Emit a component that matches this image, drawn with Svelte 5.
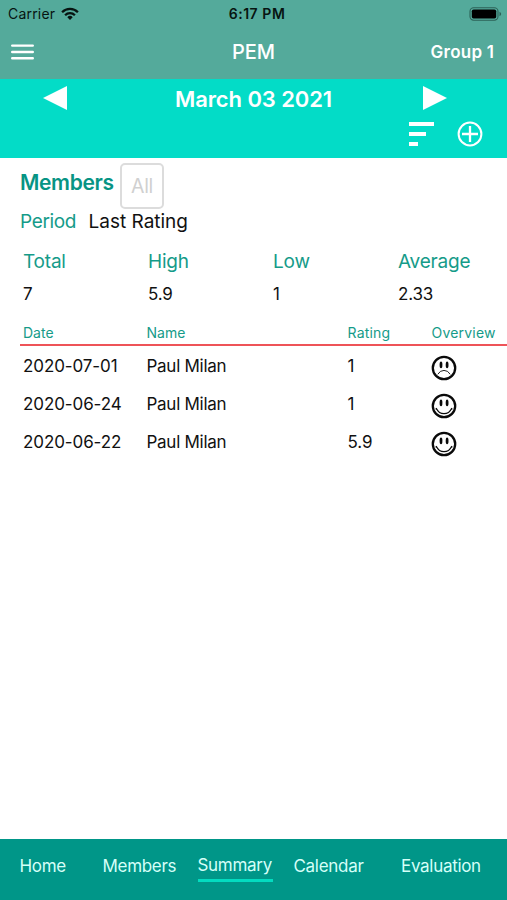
<script>
  const stats = [
    { label: 'Total', value: '7' },
    { label: 'High', value: '5.9' },
    { label: 'Low', value: '1' },
    { label: 'Average', value: '2.33' }
  ];
  const rows = [
    { date: '2020-07-01', name: 'Paul Milan', rating: '1', happy: false },
    { date: '2020-06-24', name: 'Paul Milan', rating: '1', happy: true },
    { date: '2020-06-22', name: 'Paul Milan', rating: '5.9', happy: true }
  ];
</script>

<div class="screen">
  <header>
    <div class="status">
      <div class="carrier">
        <span>Carrier</span>
        <svg width="18" height="14" viewBox="0 0 18 14" fill="none" stroke="#071411" stroke-width="2.3">
          <path d="M1.1 5.2a11.2 11.2 0 0 1 15.8 0M4.1 8.2a6.9 6.9 0 0 1 9.8 0" />
          <path d="M9 13 6.3 10.2a3.8 3.8 0 0 1 5.4 0Z" fill="#071411" stroke="none" />
        </svg>
      </div>
      <span class="time">6:17 PM</span>
      <svg class="battery" width="33" height="14" viewBox="0 0 33 14">
        <rect x="1" y=".8" width="28" height="12.4" rx="3.6" fill="none" stroke="#2d6258" stroke-width="1.1" />
        <rect x="2.8" y="2.5" width="24.4" height="9" rx="1.8" fill="#000" />
        <path d="M30.5 4.7v4.6q1.7-.8 1.7-2.3t-1.7-2.3" fill="#2d6258" />
      </svg>
    </div>
    <div class="bar">
      <svg class="menu" width="23" height="16" viewBox="0 0 23 16" stroke="#fff" stroke-width="2.4" stroke-linecap="round">
        <path d="M1.2 1.6h20.6M1.2 8h20.6M1.2 14.2h20.6" />
      </svg>
      <span class="title">PEM</span>
      <span class="group">Group 1</span>
    </div>
  </header>

  <section class="datebar">
    <div class="day">
      <svg width="24" height="24" viewBox="0 0 24 24" fill="#fff"><path d="M24 0v24L0 12Z" /></svg>
      <span class="date">March 03 2021</span>
      <svg width="24" height="24" viewBox="0 0 24 24" fill="#fff"><path d="M0 0v24l24-12Z" /></svg>
    </div>
    <div class="tools">
      <svg width="25" height="26" viewBox="0 0 25 26" fill="#fff">
        <path d="M0 1h25v4H0zM0 11h17v4H0zM0 21h9v4H0z" />
      </svg>
      <svg width="26" height="26" viewBox="0 0 26 26" fill="none" stroke="#fff">
        <circle cx="13" cy="13" r="11.4" stroke-width="2" />
        <path d="M13 5v16M5 13h16" stroke-width="2.3" />
      </svg>
    </div>
  </section>

  <main>
    <div class="members"><b>Members</b><span class="all">All</span></div>
    <div class="period"><span class="plabel">Period</span><span class="pval">Last Rating</span></div>
    <div class="stats">
      {#each stats as s}
        <div><div class="slabel">{s.label}</div><div class="sval">{s.value}</div></div>
      {/each}
    </div>
    <div class="grid head"><span>Date</span><span>Name</span><span class="hrate">Rating</span><span class="hover">Overview</span></div>
    {#each rows as r}
      <div class="grid row">
        <span class="rdate">{r.date}</span><span class="rname">{r.name}</span><span>{r.rating}</span>
        <svg width="26" height="26" viewBox="0 0 26 26" fill="none" stroke="#0a0a0a">
          <circle cx="13" cy="13" r="11.2" stroke-width="2.3" />
          <ellipse cx="10" cy="9.9" rx="1.4" ry="3.3" fill="#0a0a0a" stroke="none" />
          <ellipse cx="16.1" cy="9.9" rx="1.4" ry="3.3" fill="#0a0a0a" stroke="none" />
          {#if r.happy}
            <path d="M5.4 15.5q2.4 5.2 7.6 5.2t7.6-5.2M4.6 16.3l1.4-1M21.4 16.3l-1.4-1" stroke-width="1.2" />
          {:else}
            <path d="M6.8 19.3q2.2-3.9 6.2-3.9t6.2 3.9" stroke-width=".9" />
          {/if}
        </svg>
      </div>
    {/each}
  </main>

  <nav>
    <span class="home">Home</span>
    <span class="mem">Members</span>
    <span class="active">Summary</span>
    <span class="cal">Calendar</span>
    <span class="eval">Evaluation</span>
  </nav>
</div>

<style>
  :global(body) { margin: 0; background: #fff; }
  .screen {
    width: 507px; height: 900px; display: flex; flex-direction: column;
    overflow: hidden; background: #fff; color: #111;
    font-family: Inter, "Liberation Sans", sans-serif; white-space: nowrap;
  }
  svg { display: block; flex: none; }
  header { height: 79px; background: #54aa9b; flex: none; }
  .status, .bar { display: grid; grid-template-columns: 1fr auto 1fr; align-items: center; }
  .status { height: 27px; padding: 0 5px 0 8px; color: #071411; font-size: 14px; }
  .carrier { display: flex; align-items: center; gap: 6px; letter-spacing: .2px; }
  .time { font-weight: 600; padding-left: 4px; letter-spacing: .55px; }
  .battery, .group { justify-self: end; }
  .bar { height: 50px; padding: 0 13px 0 11px; color: #fff; }
  .title { font-size: 20px; font-weight: 500; padding-left: 2px; }
  .group { font-size: 17px; font-weight: 600; letter-spacing: .25px; margin-right: -.25px; }
  .datebar { height: 79px; background: #03dcc7; flex: none; color: #fff; }
  .day { display: grid; grid-template-columns: 132px 1fr 24px; align-items: center; height: 38px; padding: 0 60px 0 43px; }
  .date { font-size: 22px; font-weight: 600; letter-spacing: -.1px; padding-top: 1px; }
  .tools { display: flex; justify-content: flex-end; gap: 23px; padding: 4px 24px 0 0; }
  main { flex: 1; padding-left: 20px; }
  .members { display: flex; height: 51px; color: #079484; font-size: 21px; }
  .members b { font-weight: 600; line-height: 26px; padding-top: 12px; width: 100px; letter-spacing: -.35px; }
  .all { box-sizing: border-box; width: 44px; height: 46px; margin-top: 5px; border: 2px solid #dcdcdc; border-radius: 5px; color: #d0d0d0; font-size: 19.5px; line-height: 43px; text-align: center; letter-spacing: -.3px; }
  .period { display: flex; font-size: 19px; line-height: 26px; height: 24px; }
  .plabel { width: 68.5px; color: #159b89; letter-spacing: -.35px; }
  .stats { display: grid; grid-template-columns: repeat(4, 125px); padding: 15px 0 0 3px; }
  .slabel { color: #159b89; font-size: 19px; line-height: 27px; height: 26px; letter-spacing: -.2px; }
  .sval { font-size: 17px; line-height: 22px; margin-top: 9px; letter-spacing: -.2px; }
  .grid { display: grid; grid-template-columns: 123.5px 201px 84px 1fr; padding-left: 3px; align-items: center; }
  .head { height: 25px; margin-top: 14px; border-bottom: 2px solid #ee5358; color: #159b89; font-size: 14px; }
  .head span { padding-top: 1px; }
  .hrate, .hover { letter-spacing: .2px; }
  .row { height: 38px; font-size: 17px; }
  .row span { padding-top: 2px; letter-spacing: -.1px; }
  .row .rname { letter-spacing: -.27px; }
  .row svg { margin: 5px 0 0 -1px; }
  nav { height: 61px; flex: none; background: #009688; color: #d5fff8; font-size: 17px; display: flex; align-items: flex-start; padding-left: 19.5px; box-sizing: border-box; line-height: 24px; letter-spacing: -.3px; }
  nav span { margin-top: 15px; }
  .home { width: 83px; }
  .mem { width: 95px; }
  nav .active { width: 75px; margin: 14px 21px 0 0; padding-bottom: 2px; border-bottom: 3px solid #03dcc0; box-sizing: border-box; height: 29px; }
  .cal { width: 107.5px; }
</style>
